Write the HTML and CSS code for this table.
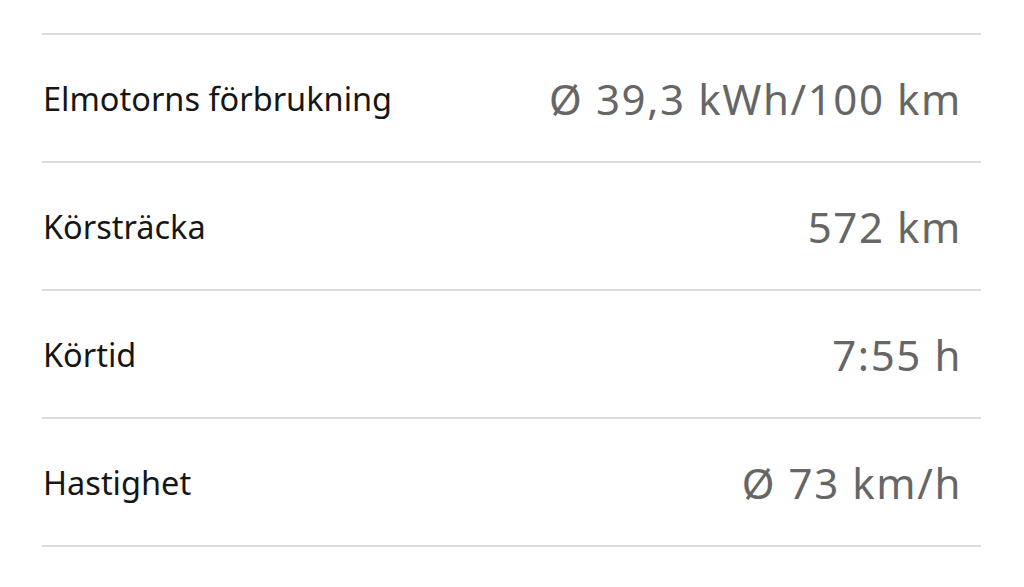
FILE: index.html
```html
<!DOCTYPE html>
<html lang="sv">
<head>
<meta charset="utf-8">
<link rel="stylesheet" href="styles.css">
</head>
<body>
<div class="list">
  <div class="row"><span class="label">Elmotorns förbrukning</span><span class="value">Ø 39,3 kWh/100 km</span></div>
  <div class="row"><span class="label">Körsträcka</span><span class="value">572 km</span></div>
  <div class="row"><span class="label">Körtid</span><span class="value">7:55 h</span></div>
  <div class="row"><span class="label">Hastighet</span><span class="value">Ø 73 km/h</span></div>
</div>
</body>
</html>
```
FILE: styles.css
```css
html, body {
  margin: 0;
  padding: 0;
  background: #ffffff;
}
body {
  font-family: "Noto Sans", "Open Sans", sans-serif;
}
.list {
  margin: 33px 43px 0 42px;
  border-top: 2px solid #dcdcdc;
}
.row {
  height: 126px;
  border-bottom: 2px solid #dcdcdc;
  display: flex;
  align-items: center;
  justify-content: space-between;
  padding: 0 19px 0 1px;
}
.label {
  font-size: 32.5px;
  color: #161616;
}
.value {
  font-size: 42px;
  letter-spacing: 1.6px;
  color: #666666;
}
```
